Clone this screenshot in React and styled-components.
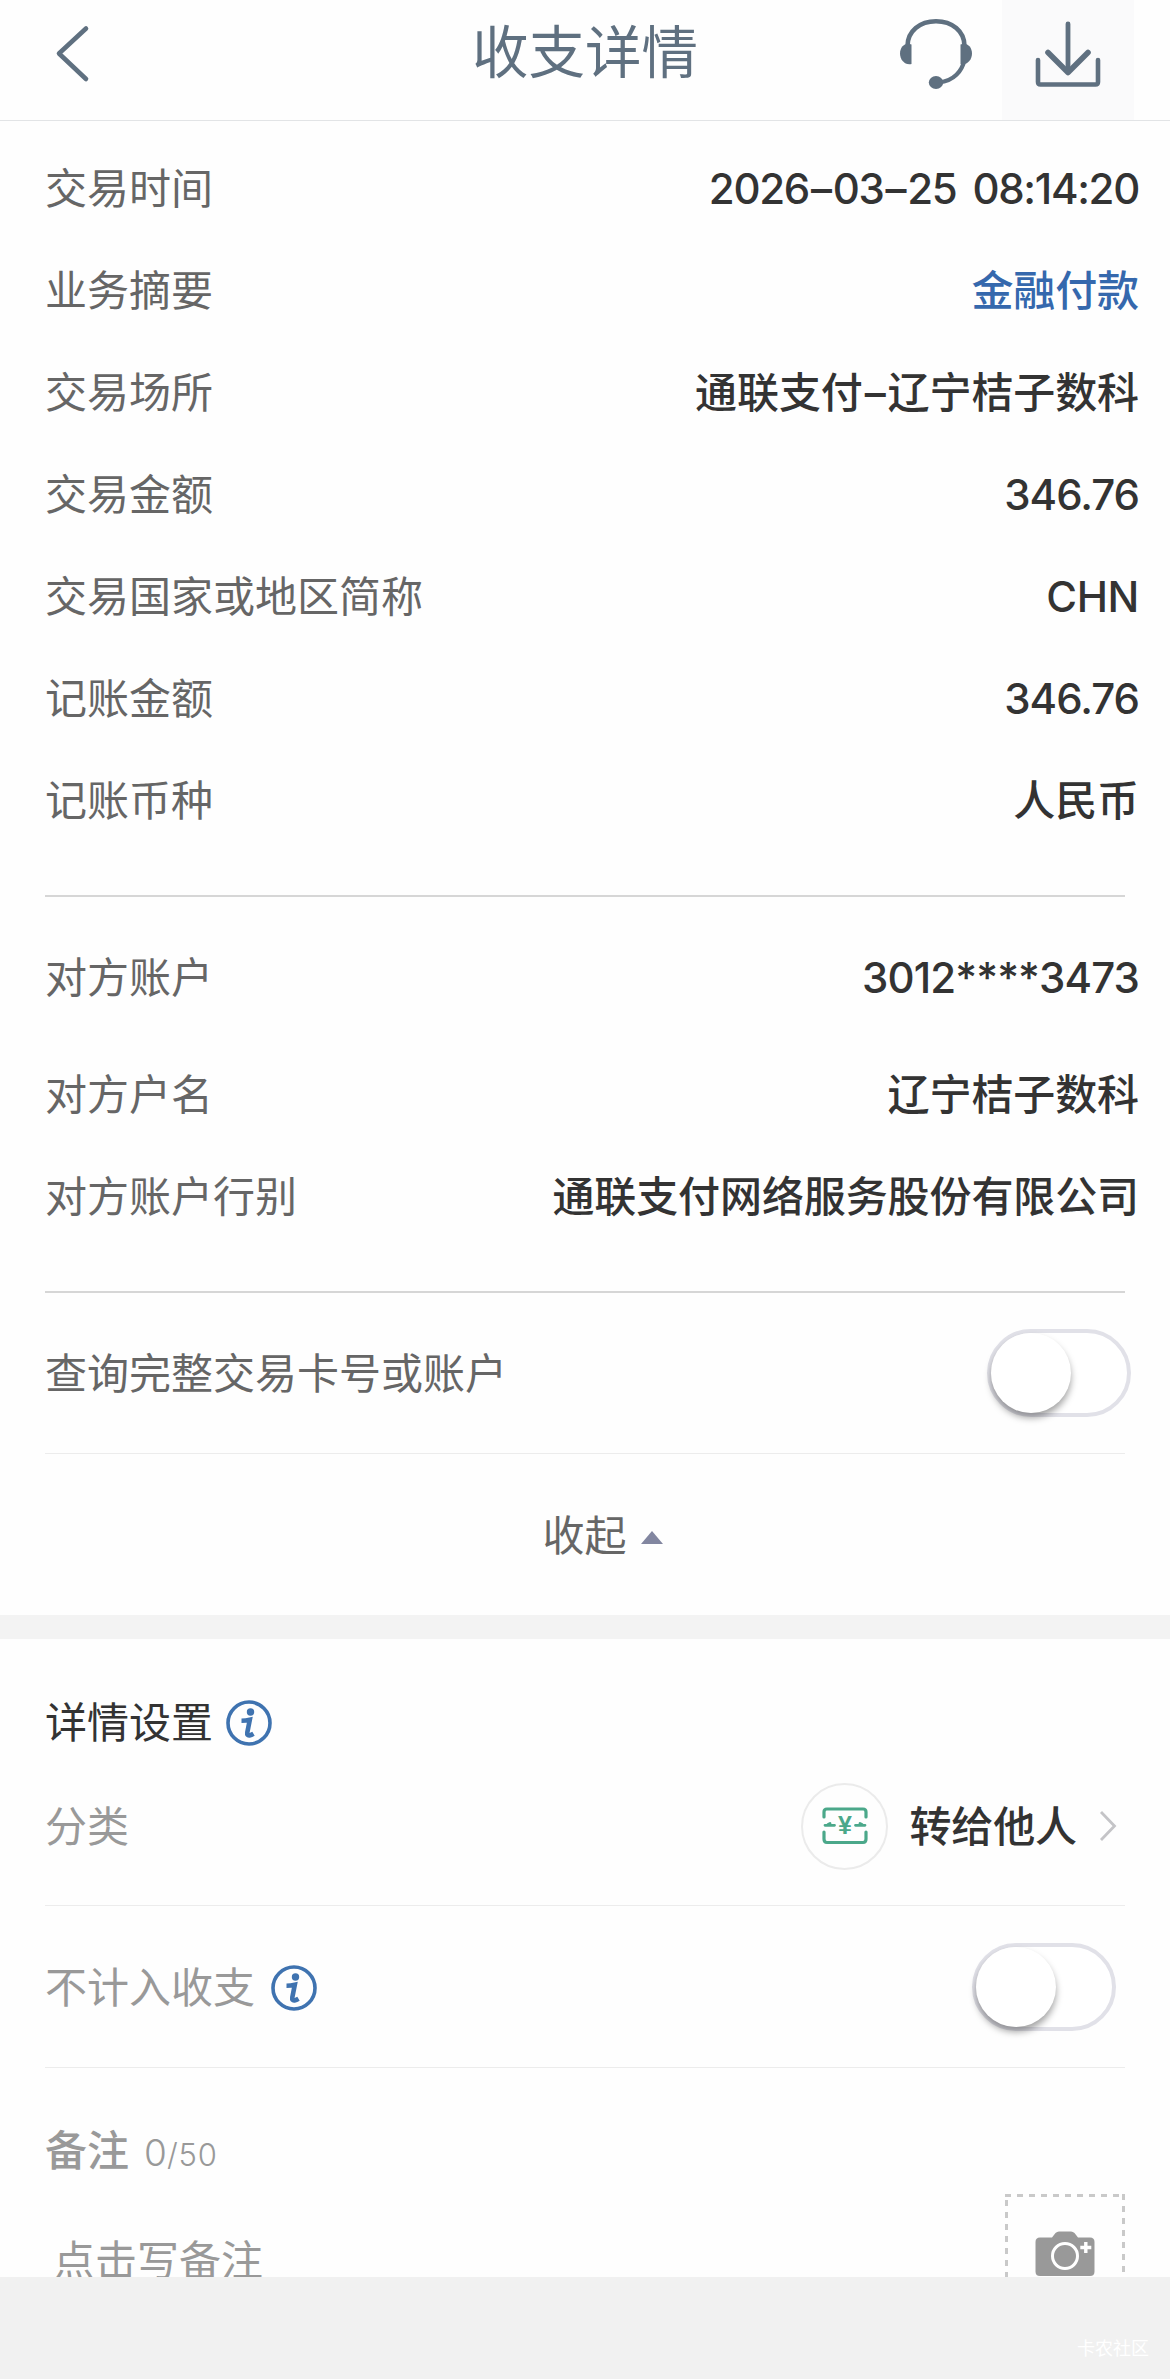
import React, { useState } from "react";
import styled, { createGlobalStyle } from "styled-components";

const tradeRows = [
    { label: "交易时间", value: "2026–03–25 08:14:20", spacing: -1.3 },
    { label: "业务摘要", value: "金融付款", link: true },
    { label: "交易场所", value: "通联支付–辽宁桔子数科" },
    { label: "交易金额", value: "346.76", spacing: -1 },
    { label: "交易国家或地区简称", value: "CHN", spacing: -0.4 },
    { label: "记账金额", value: "346.76", spacing: -1 },
    { label: "记账币种", value: "人民币" },
];

const partyRows = [
    { label: "对方账户", value: "3012****3473", spacing: -0.9, tall: true },
    { label: "对方户名", value: "辽宁桔子数科" },
    { label: "对方账户行别", value: "通联支付网络服务股份有限公司" },
];

const BackIcon = () => (
    <svg width="36" height="60" viewBox="0 0 36 60" fill="none" stroke="#5f7080" strokeWidth="4.6" strokeLinecap="round" strokeLinejoin="round">
        <path d="M32 4.500L5 29.500L32 55" />
    </svg>
);

const HeadsetIcon = () => (
    <svg width="74" height="72" viewBox="0 0 74 72" fill="none">
        <path d="M8.500 28C8.500 13 21 3.200 37 3.200S65.500 13 65.500 28" stroke="#5f7080" strokeWidth="4.600" />
        <path d="M65.500 42C63 53 55 63 40 64.500" stroke="#5f7080" strokeWidth="4.200" />
        <path d="M12.500 26.500V46C6 47.500 1 42 1 35.500S6 24 12.500 26.500Z" fill="#5f7080" />
        <path d="M61.500 26.500V46C68 47.500 73 42 73 35.500S68 24 61.500 26.500Z" fill="#5f7080" />
        <ellipse cx="37" cy="64.500" rx="7.200" ry="6.400" fill="#5f7080" />
    </svg>
);

const DownloadIcon = () => (
    <svg width="66" height="68" viewBox="0 0 66 68" fill="none" stroke="#5f7080" strokeLinecap="round" strokeLinejoin="round">
        <path d="M33 4V52" strokeWidth="4.800" />
        <path d="M13 32.500L33 52.500L53 32.500" strokeWidth="5.600" />
        <path d="M3 40V62Q3 64.500 5.500 64.500H60.500Q63 64.500 63 62V40" strokeWidth="4.600" />
    </svg>
);

const InfoIcon = () => (
    <svg width="46" height="46" viewBox="0 0 46 46" fill="none">
        <circle cx="23" cy="23" r="21" stroke="#3f73b0" strokeWidth="3.600" />
        <circle cx="24.500" cy="12" r="3.700" fill="#3f73b0" />
        <path d="M15.500 20.800Q20 20.800 23.800 19.800L21.300 32.500Q20.800 35.800 23.500 35.400Q25.500 35 27.500 33.800" stroke="#3f73b0" strokeWidth="4.600" />
    </svg>
);

const TransferIcon = () => (
    <svg width="46" height="38" viewBox="0 0 46 38" fill="none" stroke="#4ba88a" strokeWidth="3.200" strokeLinecap="round">
        <path d="M2 10V5Q2 2 5 2H41Q44 2 44 5V10" />
        <path d="M2 25V32Q2 35.500 5 35.500H41Q44 35.500 44 32V25" />
        <path d="M3 18.300H12.500M8 16.500L6 17.500M33.500 18.300H43M38 16.500L40 17.500" strokeWidth="2.800" />
        <text x="23" y="26.500" textAnchor="middle" fontFamily="Liberation Sans, sans-serif" fontWeight="700" fontSize="25" fill="#4ba88a" stroke="none">¥</text>
    </svg>
);

const ChevronIcon = () => (
    <svg width="18" height="32" viewBox="0 0 18 32" fill="none" stroke="#c4c4c7" strokeWidth="2.800">
        <path d="M2 2L15.500 16L2 30" />
    </svg>
);

const CameraIcon = () => (
    <svg width="60" height="46" viewBox="0 0 60 46" fill="none">
        <path d="M5 6.500H17L20.500 2Q22 .5 24 .5H36Q38 .5 39.500 2L43 6.500H55Q59.500 6.500 59.500 11V40.500Q59.500 45 55 45H5Q.5 45 .5 40.500V11Q.5 6.500 5 6.500Z" fill="#999" />
        <circle cx="30" cy="25" r="12.500" stroke="#fff" strokeWidth="3" />
        <path d="M50.800 11V22M45.300 16.500H56.300" stroke="#fff" strokeWidth="3.400" />
    </svg>
);

const Toggle = () => {
    const [on, setOn] = useState(false);

    return (
        <Track role="switch" aria-checked={on} $on={on} onClick={() => setOn(!on)}>
            <Knob $on={on} />
        </Track>
    );
};

// dashes inside a value get a little air on both sides
const spaceDashes = (value) =>
    value.split(/(–)/).map((part, i) => part === '–' ? <Dash key={i}>–</Dash> : part);

const DetailRow = ({ label, value, link, tall, spacing }) => (
    <Row $tall={tall}>
        <Label>{label}</Label>
        <Value $link={link} $spacing={spacing}>{spaceDashes(value)}</Value>
    </Row>
);

const App = () => {
    return (
        <Screen>
            <GlobalStyle />
            <Content>
                <Header>
                    <BackButton><BackIcon /></BackButton>
                    <Title>收支详情</Title>
                    <Actions>
                        <HeaderButton><HeadsetIcon /></HeaderButton>
                        <HeaderButton $active><DownloadIcon /></HeaderButton>
                    </Actions>
                </Header>

                <TradeSection>
                    {tradeRows.map((row) => <DetailRow key={row.label} {...row} />)}
                </TradeSection>
                <Divider $strong />
                <PartySection>
                    {partyRows.map((row) => <DetailRow key={row.label} {...row} />)}
                </PartySection>
                <Divider $strong />

                <SwitchRow $height={160} $end={39}>
                    <Label>查询完整交易卡号或账户</Label>
                    <Toggle />
                </SwitchRow>
                <Divider />
                <Collapse>
                    收起
                    <Caret />
                </Collapse>
                <Gap />

                <SettingsTitle>
                    详情设置
                    <InfoIcon />
                </SettingsTitle>
                <SettingRow>
                    <Label $muted>分类</Label>
                    <Category>
                        <CategoryBadge><TransferIcon /></CategoryBadge>
                        <Value>转给他人</Value>
                        <ChevronIcon />
                    </Category>
                </SettingRow>
                <Divider />
                <SwitchRow $height={161} $end={54}>
                    <Label $muted>
                        不计入收支
                        <InfoIcon />
                    </Label>
                    <Toggle />
                </SwitchRow>
                <Divider />

                <NoteSection>
                    <div>
                        <NoteHead>
                            <strong>备注</strong>
                            <Count>0<small>/50</small></Count>
                        </NoteHead>
                        <NoteInput>点击写备注</NoteInput>
                    </div>
                    <PhotoBox><CameraIcon /></PhotoBox>
                </NoteSection>
            </Content>
            <Footer>卡农社区</Footer>
        </Screen>
    );
};

export default App;

const GlobalStyle = createGlobalStyle`
    body {
        margin: 0;
        background-color: #f1f1f1;
    }

    * {
        box-sizing: border-box;
    }

    svg {
        display: block;
        flex-shrink: 0;
    }
`;

const Screen = styled.div`
    width: 1170px;
    height: 2379px;
    display: flex;
    flex-direction: column;
    overflow: hidden;
    font-family: Inter, "Noto Sans CJK SC", sans-serif;
    font-size: 42px;
    line-height: 60px;
    color: #333;
    white-space: nowrap;
`;

const Content = styled.main`
    height: 2277px;
    flex-shrink: 0;
    overflow: hidden;
    background-color: #fefefe;
`;

const Header = styled.header`
    display: grid;
    grid-template-columns: 1fr auto 1fr;
    height: 121px;
    border-bottom: 1px solid #e2e4e6;
`;

const BackButton = styled.div`
    padding: 24px 0 0 54px;
`;

const Title = styled.h1`
    margin: 0;
    padding-top: 12px;
    font-size: 56.5px;
    line-height: 82px;
    font-weight: 400;
    color: #5f7080;
`;

const Actions = styled.div`
    display: flex;
    justify-content: flex-end;
    padding-right: 36px;
`;

const HeaderButton = styled.div`
    width: 132px;
    display: flex;
    justify-content: center;
    padding-top: ${(props) => props.$active ? '20px' : '18px'};
    background-color: ${(props) => props.$active ? '#fafafb' : 'transparent'};
`;

const TradeSection = styled.section`
    padding: 16px 31px 44px 45px;
`;

const PartySection = styled.section`
    padding: 14px 31px 44px 45px;
`;

const Row = styled.div`
    display: flex;
    justify-content: space-between;
    align-items: center;
    height: ${(props) => props.$tall ? '132px' : '102px'};
`;

const Label = styled.span`
    display: flex;
    align-items: center;
    gap: 16px;
    padding-top: 2px;
    color: ${(props) => props.$muted ? '#999' : '#666'};
`;

const Value = styled.span`
    padding-top: 2px;
    font-weight: 500;
    color: ${(props) => props.$link ? '#3568ad' : '#333'};
    letter-spacing: ${(props) => props.$spacing || -0.1}px;
    word-spacing: 6px;
`;

const Dash = styled.span`
    margin: 0 2px;
`;

const Divider = styled.div`
    height: ${(props) => props.$strong ? '2px' : '1px'};
    margin: 0 45px;
    background-color: ${(props) => props.$strong ? '#d6d6d6' : '#ececec'};
`;

const SwitchRow = styled.div`
    display: flex;
    justify-content: space-between;
    align-items: center;
    height: ${(props) => props.$height}px;
    padding: 0 ${(props) => props.$end}px 0 45px;
`;

const Track = styled.div`
    width: 144px;
    height: 88px;
    border: 4px solid #e1e1e8;
    border-radius: 44px;
    background-color: ${(props) => props.$on ? '#4cd964' : '#fff'};
    cursor: pointer;
`;

const Knob = styled.div`
    width: 80px;
    height: 80px;
    border-radius: 50%;
    background-color: #fff;
    box-shadow: 0 5px 7px rgba(0, 0, 0, 0.36);
    transform: ${(props) => props.$on ? 'translateX(56px)' : 'none'};
    transition: transform 0.2s;
`;

const Collapse = styled.div`
    display: flex;
    justify-content: center;
    align-items: center;
    gap: 14px;
    height: 161px;
    padding: 2px 0 0 35px;
    color: #666;
`;

const Caret = styled.span`
    border: 11px solid transparent;
    border-top-width: 0;
    border-bottom: 13px solid #8286a0;
    margin-top: 3px;
`;

const Gap = styled.div`
    height: 24px;
    background-color: #f3f3f3;
`;

const SettingsTitle = styled.div`
    display: flex;
    align-items: center;
    gap: 13px;
    height: 108px;
    padding: 60px 45px 0;
`;

const SettingRow = styled.div`
    display: flex;
    justify-content: space-between;
    align-items: center;
    height: 158px;
    padding: 0 53px 0 45px;
`;

const Category = styled.div`
    display: flex;
    align-items: center;

    > svg {
        margin-left: 22px;
    }
`;

const CategoryBadge = styled.div`
    display: flex;
    align-items: center;
    justify-content: center;
    width: 87px;
    height: 87px;
    margin-right: 21px;
    border: 2px solid #ebebeb;
    border-radius: 50%;
`;

const NoteSection = styled.section`
    display: flex;
    justify-content: space-between;
    padding: 0 45px;
`;

const NoteHead = styled.div`
    display: flex;
    align-items: baseline;
    gap: 15px;
    padding-top: 53px;
    color: #999;

    strong {
        font-weight: 500;
    }
`;

const Count = styled.span`
    font-size: 37px;
    font-weight: 300;

    small {
        font-size: 31px;
        letter-spacing: 0.8px;
    }
`;

const NoteInput = styled.div`
    padding: 46px 0 0 8px;
    color: #999;
`;

/* dashes run 6px on, 6px off along the three visible edges */
const PhotoBox = styled.div`
    display: flex;
    justify-content: center;
    width: 120px;
    height: 120px;
    margin-top: 126px;
    padding-top: 37px;
    background:
        repeating-linear-gradient(90deg, #c9c9c9 0 6px, transparent 6px 12px) top / 100% 3px no-repeat,
        repeating-linear-gradient(180deg, transparent 0 6px, #c9c9c9 6px 12px) left / 3px 100% no-repeat,
        repeating-linear-gradient(180deg, #c9c9c9 0 6px, transparent 6px 12px) right / 3px 100% no-repeat;
`;

const Footer = styled.footer`
    flex: 1;
    padding: 59px 21px 0 0;
    text-align: right;
    font-size: 18px;
    line-height: 26px;
    color: #fff;
    background-color: #f1f1f1;
`;
